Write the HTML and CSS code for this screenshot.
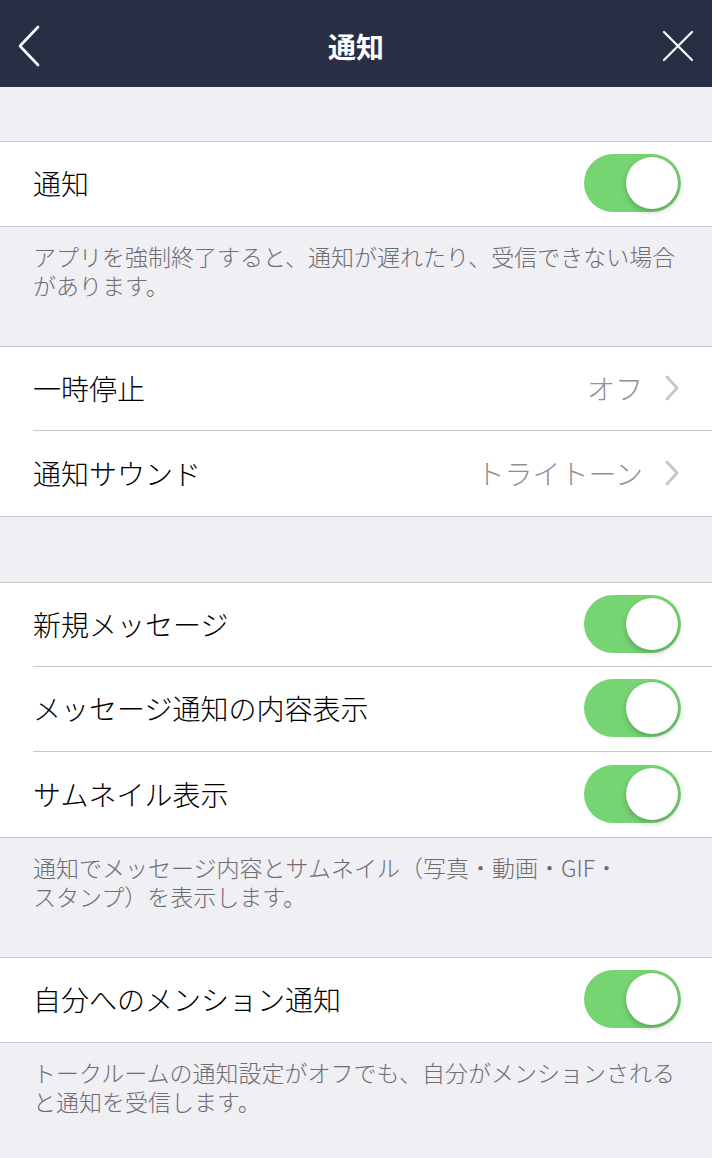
FILE: index.html
```html
<!DOCTYPE html>
<html lang="ja">
<head>
    <meta charset="UTF-8">
    <meta name="viewport" content="width=device-width, initial-scale=1.0">
    <title>通知</title>
    <link rel="stylesheet" href="styles.css">
</head>
<body>
    <!-- Navigation bar -->
    <header class="navbar">
        <div class="nav-left">
            <svg class="icon-back" width="24" height="42" viewBox="0 0 24 42">
                <path d="M20 2 L2 21 L20 40" fill="none" stroke="#fff" stroke-width="2.6" stroke-linecap="round" stroke-linejoin="round"/>
            </svg>
        </div>
        <h1 class="nav-title">通知</h1>
        <div class="nav-right">
            <svg class="icon-close" width="32" height="32" viewBox="0 0 32 32">
                <path d="M2 2 L30 30 M30 2 L2 30" fill="none" stroke="#fff" stroke-width="2.2" stroke-linecap="round"/>
            </svg>
        </div>
    </header>

    <div class="spacer"></div>

    <section class="group">
        <div class="row">
            <div class="row-inner">
                <span class="label">通知</span>
                <span class="switch on"><span class="knob"></span></span>
            </div>
        </div>
    </section>
    <p class="footer">アプリを強制終了すると、通知が遅れたり、受信できない場合があります。</p>

    <section class="group">
        <div class="row">
            <div class="row-inner">
                <span class="label">一時停止</span>
                <span class="value">オフ</span>
                <svg class="chevron" width="18" height="28" viewBox="0 0 18 28">
                    <path d="M4 3 L14 14 L4 25" fill="none" stroke="#c7c7cc" stroke-width="3" stroke-linecap="round" stroke-linejoin="round"/>
                </svg>
            </div>
        </div>
        <div class="row">
            <div class="row-inner">
                <span class="label">通知サウンド</span>
                <span class="value">トライトーン</span>
                <svg class="chevron" width="18" height="28" viewBox="0 0 18 28">
                    <path d="M4 3 L14 14 L4 25" fill="none" stroke="#c7c7cc" stroke-width="3" stroke-linecap="round" stroke-linejoin="round"/>
                </svg>
            </div>
        </div>
    </section>

    <div class="spacer spacer-tall"></div>

    <section class="group">
        <div class="row">
            <div class="row-inner">
                <span class="label">新規メッセージ</span>
                <span class="switch on"><span class="knob"></span></span>
            </div>
        </div>
        <div class="row">
            <div class="row-inner">
                <span class="label">メッセージ通知の内容表示</span>
                <span class="switch on"><span class="knob"></span></span>
            </div>
        </div>
        <div class="row">
            <div class="row-inner">
                <span class="label">サムネイル表示</span>
                <span class="switch on"><span class="knob"></span></span>
            </div>
        </div>
    </section>
    <p class="footer footer-narrow">通知でメッセージ内容とサムネイル（写真・動画・GIF・スタンプ）を表示します。</p>

    <section class="group">
        <div class="row">
            <div class="row-inner">
                <span class="label">自分へのメンション通知</span>
                <span class="switch on"><span class="knob"></span></span>
            </div>
        </div>
    </section>
    <p class="footer">トークルームの通知設定がオフでも、自分がメンションされると通知を受信します。</p>
</body>
</html>
```

FILE: styles.css
```css
body {
    margin: 0;
    padding: 0;
    background-color: #efeff4;
    font-family: "Noto Sans CJK JP", "Noto Sans", sans-serif;
    color: #000;
}

/* navigation bar */
.navbar {
    height: 87px;
    box-sizing: border-box;
    padding-top: 4px;
    display: grid;
    grid-template-columns: 1fr auto 1fr;
    align-items: center;
    background-color: #282f45;
}

.nav-left {
    display: flex;
    padding-left: 18px;
}

.nav-right {
    display: flex;
    justify-content: flex-end;
    padding-right: 18px;
}

.nav-title {
    margin: 0;
    font-size: 28px;
    font-weight: bold;
    color: #fff;
    line-height: 1;
}

.spacer {
    height: 54px;
}

.spacer-tall {
    height: 65px;
}

/* grouped table */
.group {
    background-color: #fff;
    border-top: 1px solid #c8c7cc;
    border-bottom: 1px solid #c8c7cc;
}

.row {
    height: 84px;
    padding-left: 33px;
    display: flex;
}

.row + .row {
    height: 85px;
}

.row-inner {
    flex: 1;
    display: flex;
    align-items: center;
    padding-right: 31px;
    padding-bottom: 2px;
    border-bottom: 1px solid #c8c7cc;
}

.row:last-child .row-inner {
    border-bottom: none;
}

.label {
    flex: 1;
    font-size: 28px;
    font-weight: 300;
    line-height: 1;
}

.value {
    font-size: 28px;
    font-weight: 300;
    color: #8e8e93;
    margin-right: 20px;
    line-height: 1;
}

.chevron {
    display: block;
}

/* switch */
.switch {
    width: 97px;
    height: 58px;
    border-radius: 29px;
    background-color: #e5e5ea;
    position: relative;
    box-sizing: border-box;
}

.switch.on {
    background-color: #76d572;
}

.knob {
    position: absolute;
    top: 3px;
    right: 3px;
    width: 52px;
    height: 52px;
    border-radius: 50%;
    background-color: #fff;
    box-shadow: 0 3px 6px rgba(0, 0, 0, 0.22), 0 0 1px rgba(0, 0, 0, 0.15);
}

/* section footer text */
.footer {
    margin: 0;
    padding: 15px 30px 46px 33px;
    font-size: 23px;
    font-weight: 300;
    line-height: 29px;
    color: #6d6d72;
}

.footer-narrow {
    padding-right: 85px;
}
```
